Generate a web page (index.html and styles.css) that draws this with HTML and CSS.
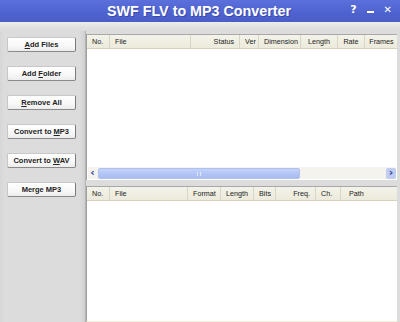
FILE: index.html
```html
<!DOCTYPE html>
<html>
<head>
<meta charset="utf-8">
<link rel="stylesheet" href="styles.css">
</head>
<body>
<div class="window">
  <div class="titlebar">
    <div class="title">SWF FLV to MP3 Converter</div>
    <div class="ctrls"><span class="q">?</span><span class="min"></span><span class="x">✕</span></div>
  </div>
  <div class="band"></div>
  <div class="main">
    <div class="side">
      <button class="btn"><u>A</u>dd Files</button>
      <button class="btn">Add <u>F</u>older</button>
      <button class="btn"><u>R</u>emove All</button>
      <button class="btn">Convert to <u>M</u>P3</button>
      <button class="btn">Convert to <u>W</u>AV</button>
      <button class="btn">Merge MP3</button>
    </div>
    <div class="content">
      <div class="list top">
        <div class="head">
          <span class="c" style="width:23px">No.</span>
          <span class="c" style="width:81px">File</span>
          <span class="c r" style="width:49px">Status</span>
          <span class="c" style="width:19px">Ver</span>
          <span class="c" style="width:42px">Dimension</span>
          <span class="c m" style="width:37px">Length</span>
          <span class="c m" style="width:27px">Rate</span>
          <span class="c m last" style="width:33px">Frames</span>
        </div>
        <div class="body"></div>
        <div class="hscroll">
          <span class="arrow">&lsaquo;</span>
          <div class="track"><div class="thumb"><span class="grip"></span></div></div>
          <span class="arrow rbtn">&rsaquo;</span>
        </div>
      </div>
      <div class="list bottom">
        <div class="head">
          <span class="c" style="width:23px">No.</span>
          <span class="c" style="width:78px">File</span>
          <span class="c" style="width:33px">Format</span>
          <span class="c" style="width:33px">Length</span>
          <span class="c" style="width:22px">Bits</span>
          <span class="c r" style="width:40px">Freq.</span>
          <span class="c" style="width:25px">Ch.</span>
          <span class="c p last" style="width:57px">Path</span>
        </div>
        <div class="body"></div>
      </div>
    </div>
  </div>
</div>
</body>
</html>
```
FILE: styles.css
```css
* { box-sizing: border-box; }
html, body { margin: 0; padding: 0; }
body {
  width: 400px; height: 322px; overflow: hidden;
  font-family: "Liberation Sans", Tahoma, sans-serif;
  background: #dcdcdc;
}
.window { width: 400px; height: 322px; display: flex; flex-direction: column; }
.titlebar {
  height: 22px; flex: none; position: relative;
  background: linear-gradient(#5c70dc, #4e62d0 60%, #4a5ec6);
  display: flex; align-items: center; justify-content: center;
}
.title {
  color: #fff; font-family: "Liberation Sans", Arial, sans-serif; font-weight: bold;
  font-size: 14.3px; margin-left: -2px;
  text-shadow: 1px 1px 0 rgba(40,50,130,0.5);
}
.ctrls {
  position: absolute; right: 8px; top: 3px; display: flex; align-items: center; gap: 10px;
  color: #fff; font-family: "DejaVu Sans", sans-serif; font-weight: bold; font-size: 11px;
}
.ctrls .min { width: 7px; height: 2px; background: #fff; margin-top: 5px; }
.ctrls .x { font-size: 10px; }
.band { height: 9px; flex: none; background: linear-gradient(#ededed, #e2e2e2 50%, #dadada); }
.main { flex: 1; display: flex; min-height: 0; }
.side {
  width: 86px; flex: none; display: flex; flex-direction: column; align-items: flex-start;
  padding: 6px 0 0 7px; gap: 14px;
  border-right: 1px solid #b4b4b4;
  background: linear-gradient(90deg, #d6d6d6, #dcdcdc 4px, #dcdcdc 80px, #d0d0d0);
}
.btn {
  width: 69px; height: 15px; padding: 0; margin: 0; white-space: nowrap;
  font-family: "Liberation Sans", Tahoma, sans-serif; font-weight: bold; font-size: 7.5px; color: #222;
  background: linear-gradient(#ffffff, #f8f8f8 60%, #ececec);
  border: 1px solid #c8c8c8; border-right-color: #7a7a7a; border-bottom-color: #8a8a8a;
  border-radius: 2px;
}
.btn u { text-decoration: underline; }
.content { flex: 1; display: flex; flex-direction: column; padding: 3px 3px 0 0; gap: 6px; min-width: 0; }
.list { background: #fff; border-left: 1px solid #a0a0a0; border-top: 1px solid #a8a8a8; display: flex; flex-direction: column; }
.list.top { height: 146px; flex: none; }
.list.bottom { flex: 1; border-bottom: 1px solid #f4f0d8; }
.head {
  height: 14px; flex: none; display: flex; align-items: center; overflow: hidden;
  background: linear-gradient(#f4f3ea, #ebeadb);
  border-bottom: 1px solid #d6d2be;
  font-size: 7.2px; color: #222;
}
.c { height: 14px; line-height: 14px; padding: 0 4px 0 5px; border-right: 1px solid #d8d5c4; white-space: nowrap; flex: none; overflow: hidden; }
.c.r { text-align: right; padding: 0 5px 0 2px; }
.c.m { text-align: center; padding: 0; }
.c.p { padding-left: 8px; }
.c.last { border-right: none; }
.body { flex: 1; }
.hscroll { height: 12px; flex: none; display: flex; align-items: center; background: #f4f3ee; margin: 0 1px 1px 1px; }
.arrow {
  width: 9px; height: 11px; line-height: 10px; text-align: center; color: #2840a0; font-size: 11px; font-weight: bold;
  font-family: "DejaVu Sans", sans-serif;
}
.arrow.rbtn { background: #c0ccf0; border-radius: 2px; width: 10px; }
.track { flex: 1; height: 11px; padding: 0 1px; }
.thumb {
  width: 202px; height: 11px; border-radius: 2px;
  background: linear-gradient(#c6d4fa, #b4c6f6 50%, #aabcf0);
  border: 1px solid #b0c0ec; position: relative;
}
.grip { position: absolute; left: 98px; top: 3px; width: 4px; height: 4px; border-left: 1px solid #e0e8ff; border-right: 1px solid #e0e8ff; }
```
